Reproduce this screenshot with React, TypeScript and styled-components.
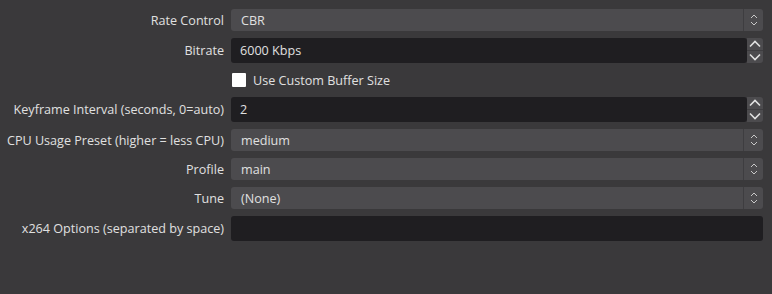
import styled, { createGlobalStyle } from "styled-components";

const GlobalStyle = createGlobalStyle`
  html, body {
    margin: 0;
    padding: 0;
    background: #3a393b;
  }
  body {
    font-family: "Open Sans", "Noto Sans", "DejaVu Sans", sans-serif;
  }
`;

type Field =
  | { kind: "combo"; label: string; value: string }
  | { kind: "spin"; label: string; value: string }
  | { kind: "check"; label: string }
  | { kind: "text"; label: string; value: string };

const fields: Field[] = [
  { kind: "combo", label: "Rate Control", value: "CBR" },
  { kind: "spin", label: "Bitrate", value: "6000 Kbps" },
  { kind: "check", label: "Use Custom Buffer Size" },
  { kind: "spin", label: "Keyframe Interval (seconds, 0=auto)", value: "2" },
  { kind: "combo", label: "CPU Usage Preset (higher = less CPU)", value: "medium" },
  { kind: "combo", label: "Profile", value: "main" },
  { kind: "combo", label: "Tune", value: "(None)" },
  { kind: "text", label: "x264 Options (separated by space)", value: "" },
];

function SmallChevrons() {
  return (
    <svg width="8" height="14" viewBox="0 0 8 14">
      <path d="M1 5 L4 2 L7 5" fill="none" stroke="#c8c8c8" strokeWidth="1" />
      <path d="M1 9 L4 12 L7 9" fill="none" stroke="#c8c8c8" strokeWidth="1" />
    </svg>
  );
}

function Chevron({ up }: { up?: boolean }) {
  return (
    <svg width="12" height="8" viewBox="0 0 12 8">
      <path
        d={up ? "M1 6.5 L6 1.5 L11 6.5" : "M1 1.5 L6 6.5 L11 1.5"}
        fill="none"
        stroke="#e0e0e0"
        strokeWidth="1.6"
      />
    </svg>
  );
}

function FieldControl({ field }: { field: Field }) {
  switch (field.kind) {
    case "combo":
      return (
        <Combo>
          <ComboText>{field.value}</ComboText>
          <ComboArrow>
            <SmallChevrons />
          </ComboArrow>
        </Combo>
      );
    case "spin":
      return (
        <SpinRow>
          <Input>{field.value}</Input>
          <SpinButtons>
            <SpinButton>
              <Chevron up />
            </SpinButton>
            <SpinButton>
              <Chevron />
            </SpinButton>
          </SpinButtons>
        </SpinRow>
      );
    case "check":
      return (
        <CheckRow>
          <CheckBox />
          <CheckLabel>{field.label}</CheckLabel>
        </CheckRow>
      );
    default:
      return <Input>{field.value}</Input>;
  }
}

export default function App() {
  return (
    <>
      <GlobalStyle />
      <Form>
        {fields.map((f, i) => (
          <Row key={i}>
            <Label>{f.kind === "check" ? "" : f.label}</Label>
            <FieldControl field={f} />
          </Row>
        ))}
      </Form>
    </>
  );
}

const Form = styled.div`
  width: 772px;
  height: 294px;
  box-sizing: border-box;
  padding: 9px 9px 0 0;
  display: flex;
  flex-direction: column;
  gap: 7px;
  color: #e0e0e0;
  font-size: 12.6px;
`;

const Row = styled.div`
  display: grid;
  grid-template-columns: 224px 1fr;
  column-gap: 7px;
  align-items: center;
`;

const Label = styled.div`
  text-align: right;
  white-space: nowrap;
  color: #e0e0e0;
`;

const Combo = styled.div`
  height: 22px;
  display: flex;
  background: #4c4b4e;
  border-radius: 3px;
`;

const ComboText = styled.div`
  flex: 1;
  display: flex;
  align-items: center;
  padding-left: 10px;
`;

const ComboArrow = styled.div`
  width: 19px;
  display: flex;
  align-items: center;
  justify-content: center;
  border-left: 1px solid #3e3d40;
`;

const SpinRow = styled.div`
  display: flex;
  height: 25px;
`;

const Input = styled.div`
  flex: 1;
  height: 25px;
  box-sizing: border-box;
  display: flex;
  align-items: center;
  padding-left: 9px;
  background: #1f1e21;
  border-radius: 3px;
`;

const SpinButtons = styled.div`
  width: 16px;
  display: flex;
  flex-direction: column;
  background: #4c4b4e;
  border-radius: 0 3px 3px 0;
  overflow: hidden;
`;

const SpinButton = styled.div`
  flex: 1;
  display: flex;
  align-items: center;
  justify-content: center;
  & + & {
    border-top: 1px solid #3e3d40;
  }
`;

const CheckRow = styled.div`
  height: 20px;
  display: flex;
  align-items: center;
  gap: 7px;
  padding-left: 1px;
`;

const CheckBox = styled.div`
  width: 14px;
  height: 14px;
  background: #ffffff;
  border-radius: 1px;
`;

const CheckLabel = styled.div`
  color: #e0e0e0;
`;
